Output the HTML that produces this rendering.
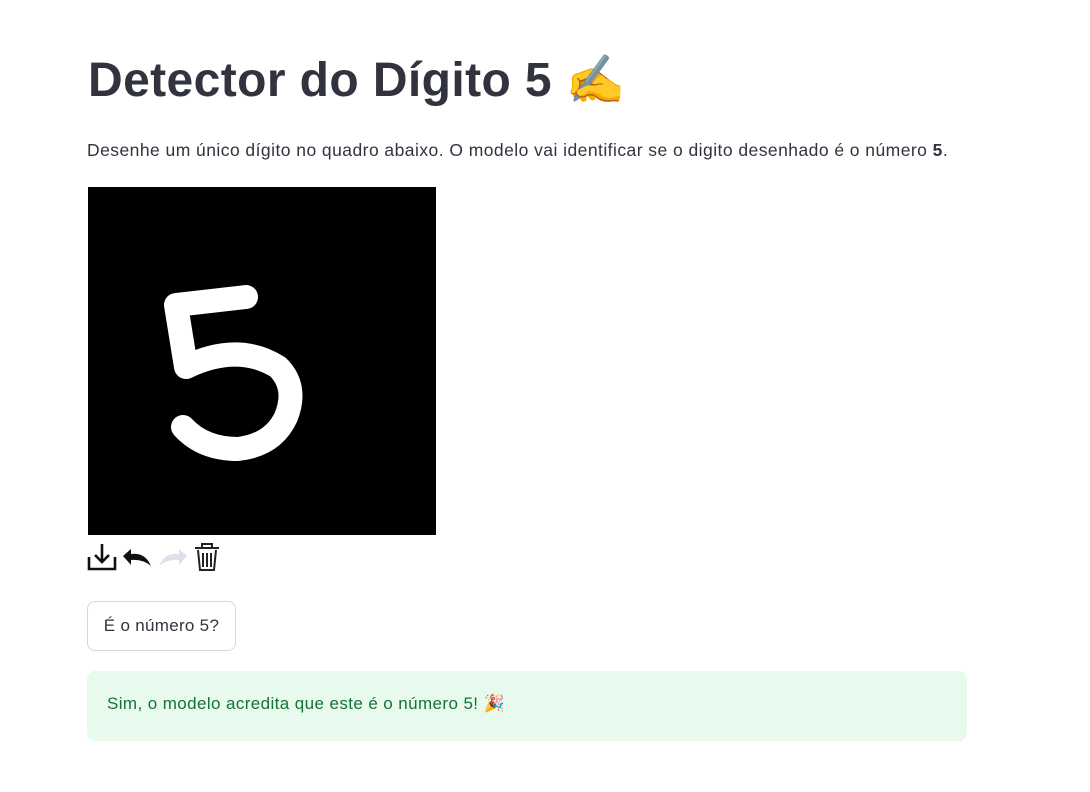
<!DOCTYPE html>
<html><head><meta charset="utf-8"><style>
body{margin:0;background:#fff;font-family:"Liberation Sans",sans-serif;color:#31333f;}
h1{position:absolute;left:88px;top:50px;margin:0;font-size:48px;font-weight:bold;letter-spacing:0.4px;line-height:60px;}
p{position:absolute;left:87px;top:138px;margin:0;font-size:17.5px;letter-spacing:0.45px;line-height:24px;}
.cv{position:absolute;left:88px;top:187px;width:348px;height:348px;background:#000;}
.btn{position:absolute;left:87px;top:601px;width:149px;height:50px;border:1px solid #d6d6d9;border-radius:8px;box-sizing:border-box;font-size:17px;letter-spacing:0.3px;display:flex;align-items:center;justify-content:center;}
.ok{position:absolute;left:87px;top:671px;width:880px;height:70px;background:#e8f9ee;border-radius:8px;color:#177233;font-size:17px;letter-spacing:0.4px;box-sizing:border-box;padding:23px 20px;}
</style></head><body>
<h1>Detector do Dígito 5 <span style="font-family:'Noto Color Emoji',sans-serif">✍️</span></h1>
<p>Desenhe um único dígito no quadro abaixo. O modelo vai identificar se o digito desenhado é o número <b>5</b>.</p>
<div class="cv"><svg width="348" height="348"><path d="M158 110 L88 118 L98 180 Q150 155 190 180 Q210 200 198 230 Q185 258 150 262 Q115 262 95 240" fill="none" stroke="#fff" stroke-width="24" stroke-linecap="round" stroke-linejoin="round"/></svg></div>
<svg style="position:absolute;left:87px;top:540px" width="140" height="32">
<g fill="none" stroke="#111" stroke-width="2.6"><path d="M2 17 V29 H28 V17"/><path d="M15 4 V22 M8 15 L15 22 L22 15"/></g>
<path d="M36 16 L44 9 V14 Q58 12 64 26 Q56 19 44 20 V25 Z" fill="#111"/>
<path d="M100 16 L92 9 V14 Q78 12 72 26 Q80 19 92 20 V25 Z" fill="#dde2ea"/>
<g fill="none" stroke="#222" stroke-width="2"><path d="M108 8 H132 M115 8 V4 H125 V8"/><path d="M111 10 L113 30 H127 L129 10"/><path d="M116 13 V27 M120 13 V27 M124 13 V27"/></g>
</svg>
<div class="btn">É o número 5?</div>
<div class="ok">Sim, o modelo acredita que este é o número 5! 🎉</div>
</body></html>
